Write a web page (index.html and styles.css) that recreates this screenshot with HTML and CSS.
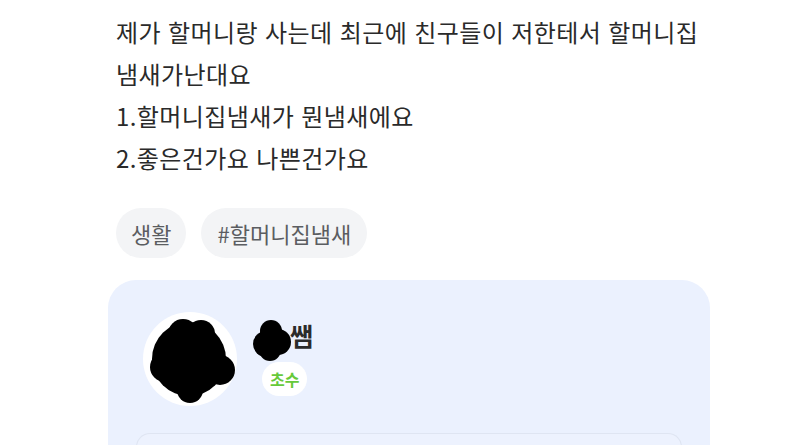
FILE: index.html
```html
<!DOCTYPE html>
<html lang="ko">
<head>
<meta charset="utf-8">
<link rel="stylesheet" href="styles.css">
</head>
<body>
<main class="page">
  <div class="post-body">
    <p class="line">제가 할머니랑 사는데 최근에 친구들이 저한테서 할머니집</p>
    <p class="line">냄새가난대요</p>
    <p class="line">1.할머니집냄새가 뭔냄새에요</p>
    <p class="line">2.좋은건가요 나쁜건가요</p>
  </div>
  <div class="tags">
    <span class="tag">생활</span>
    <span class="tag">#할머니집냄새</span>
  </div>
  <section class="answer-card">
    <div class="profile">
      <div class="avatar">
        <svg class="blob" width="94" height="94" viewBox="0 0 94 94">
          <circle cx="46" cy="47" r="37" fill="#000"/>
          <circle cx="40" cy="22" r="15" fill="#000"/>
          <circle cx="58" cy="22" r="14" fill="#000"/>
          <circle cx="77" cy="58" r="15" fill="#000"/>
          <circle cx="47" cy="78" r="13" fill="#000"/>
          <circle cx="22" cy="55" r="15" fill="#000"/>
        </svg>
      </div>
      <div class="who">
        <div class="name">
          <svg class="redact" width="40" height="44" viewBox="0 0 40 44">
            <circle cx="19" cy="13" r="11" fill="#000"/>
            <circle cx="14" cy="26" r="13" fill="#000"/>
            <circle cx="26" cy="24" r="13" fill="#000"/>
            <circle cx="18" cy="32" r="11" fill="#000"/>
            <circle cx="20" cy="22" r="14" fill="#000"/>
          </svg>쌤</div>
        <span class="badge">초수</span>
      </div>
    </div>
    <div class="inner"></div>
  </section>
</main>
</body>
</html>
```

FILE: styles.css
```css
* { box-sizing: border-box; }
html, body {
  margin: 0;
  padding: 0;
  background: #ffffff;
}
body {
  font-family: "Noto Sans CJK KR", "Noto Sans", sans-serif;
  color: #2a2a2a;
}
.page {
  width: 800px;
  height: 445px;
  overflow: hidden;
  padding: 11px 90px 0 108px;
}
.post-body {
  padding-left: 8px;
}
.line {
  margin: 0;
  font-size: 24px;
  line-height: 42px;
  letter-spacing: 0.4px;
  white-space: nowrap;
}
.tags {
  display: flex;
  gap: 15px;
  margin-top: 29px;
  padding-left: 8px;
}
.tag {
  display: inline-flex;
  align-items: center;
  height: 50px;
  padding: 0 15px;
  border-radius: 25px;
  background: #f3f4f6;
  color: #5b5d61;
  font-size: 22px;
}
.tag + .tag {
  padding: 0 16px;
}
.answer-card {
  margin-top: 22px;
  width: 602px;
  height: 165px;
  background: #ebf1fe;
  border-radius: 28px 28px 0 0;
  padding: 32px 28px 0;
}
.profile {
  display: flex;
  align-items: flex-start;
  padding-left: 7px;
  gap: 25px;
}
.avatar {
  width: 94px;
  height: 94px;
  border-radius: 50%;
  background: #ffffff;
  flex: none;
}
.blob { display: block; }
.who {
  display: flex;
  flex-direction: column;
  align-items: flex-start;
  padding-top: 6px;
}
.name {
  position: relative;
  font-size: 25px;
  font-weight: 700;
  line-height: 34px;
  color: #2b2b2b;
  padding-left: 28px;
}
.redact {
  position: absolute;
  left: -10px;
  top: 0;
}
.badge {
  margin-top: 10px;
  display: inline-flex;
  align-items: center;
  justify-content: center;
  height: 34px;
  padding: 0 8px;
  border-radius: 17px;
  background: #ffffff;
  color: #66c93a;
  font-size: 16px;
  font-weight: 700;
}
.inner {
  margin-top: 27px;
  height: 40px;
  border: 1px solid #dfe5f2;
  border-bottom: none;
  border-radius: 14px 14px 0 0;
  background: #edf2fe;
}
```
